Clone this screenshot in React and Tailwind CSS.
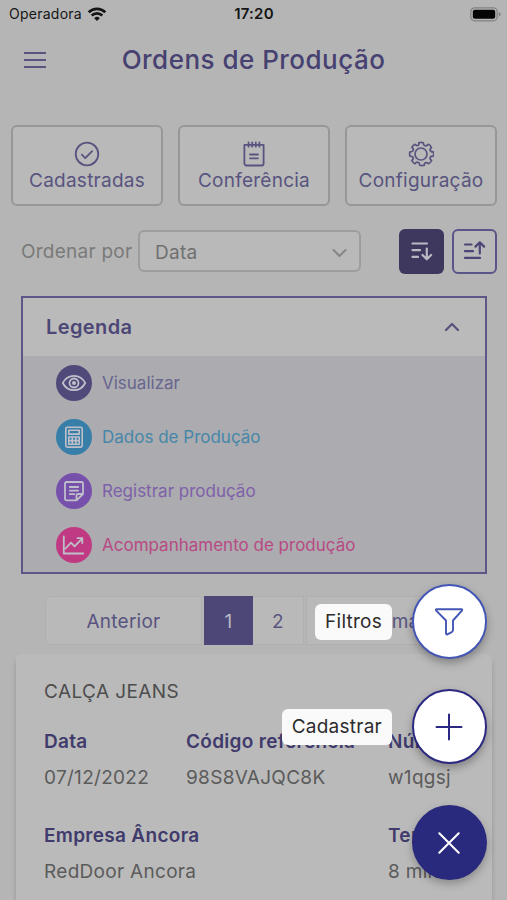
import React from "react";

const stroke = { fill: "none", stroke: "currentColor", strokeLinecap: "round", strokeLinejoin: "round" };

const WifiIcon = () => (
  <svg width="20" height="15" viewBox="0 0 20 15" fill="none" stroke="currentColor" strokeWidth="2.7">
    <path d="M1.7 5.2a11.8 11.8 0 0 1 16.6 0" />
    <path d="M4.7 8.5a7.5 7.5 0 0 1 10.6 0" />
    <path d="M10 14 L7.2 11.2a4 4 0 0 1 5.6 0z" fill="currentColor" stroke="none" />
  </svg>
);

const BatteryIcon = () => (
  <svg width="31" height="15" viewBox="0 0 31 15">
    <rect x="0.8" y="0.8" width="26.4" height="13" rx="4" fill="none" stroke="#838383" strokeWidth="1.3" />
    <rect x="2.8" y="2.8" width="22.4" height="9" rx="2" fill="#050505" />
    <path d="M28.8 5c1.5.5 2 1.4 2 2.3s-.5 1.8-2 2.3z" fill="#838383" />
  </svg>
);

const CheckIcon = () => (
  <svg width="26" height="26" viewBox="0 0 26 26" {...stroke} strokeWidth="1.8">
    <circle cx="13" cy="13" r="11.3" />
    <path d="M7.8 13.7l3.5 3.4 6.8-7" />
  </svg>
);

const NotepadIcon = () => (
  <svg width="26" height="26" viewBox="0 0 26 26" {...stroke} strokeWidth="1.8">
    <path d="M3.4 3.8h19.2v18.700a2 2 0 0 1-2 2H5.400a2 2 0 0 1-2-2z" />
    <path d="M7.600 1.500v4.200M11.200 1.500v4.200M14.800 1.500v4.200M18.400 1.500v4.200M9 13.500h8M9 17.300h8" />
  </svg>
);

const GearIcon = () => (
  <svg width="26" height="26" viewBox="0 0 26 26" {...stroke} strokeWidth="1.7">
    <circle cx="13" cy="13" r="6" />
    <path d="M10.700 1.800q2.300-1 4.600 0q.1 3 2.100 3t3-1.500q2.200 1 3 3.200q-2 1.800-1 3.300t2.900 1q.8 2.200 0 4.400q-2.900-.1-3.200 1.600t1.500 2.700q-1 2.200-3.200 3.200q-1.500-1.700-3-.9t-1.100 2.500q-2.200.8-4.600 0q.1-2.600-1.700-3t-3 1.400q-2.200-1-3.200-3.200q2-1.500 1.200-3t-3-1.300q-.8-2.200 0-4.400q2.800.2 3.300-1.500t-1.500-2.800q1-2.200 3.200-3.200q1.500 1.900 2.900 1.200t.8-2.700z" />
  </svg>
);

const SortDownIcon = () => (
  <svg width="24" height="20" viewBox="0 0 24 20" {...stroke} strokeWidth="2.200">
    <path d="M2.500 2.500h14.500M2.500 9.200h7.500M2.500 15.900h5.500M16.800 7.500v10.600M12.500 14l4.300 4.300 4.300-4.300" />
  </svg>
);

const SortUpIcon = () => (
  <svg width="24" height="20" viewBox="0 0 24 20" {...stroke} strokeWidth="2.200">
    <path d="M2 3.500h6.500M2 10.200h8M2 16.900h15M16.800 12.500v-11M12.500 5.600l4.300-4.300 4.300 4.300" />
  </svg>
);

const EyeIcon = () => (
  <svg width="26" height="26" viewBox="0 0 26 26" {...stroke} strokeWidth="1.8">
    <path d="M1.800 13C4 8.500 8 5.800 13 5.800S22 8.500 24.200 13C22 17.500 18 20.200 13 20.200S4 17.500 1.800 13z" />
    <circle cx="13" cy="13" r="4.500" />
    <circle cx="13" cy="13" r="2" fill="currentColor" stroke="none" />
  </svg>
);

const CalculatorIcon = () => (
  <svg width="26" height="26" viewBox="0 0 26 26" {...stroke} strokeWidth="1.6">
    <rect x="4.800" y="3.300" width="16.400" height="19.800" rx="1.500" />
    <rect x="7.800" y="6.300" width="10.400" height="3.800" />
    <path d="M7.800 13h10.400v7.200H7.800zM11.300 13v7.200M14.800 13v7.200M7.800 16.600h10.400" />
  </svg>
);

const NoteIcon = () => (
  <svg width="26" height="26" viewBox="0 0 26 26" {...stroke} strokeWidth="1.8">
    <path d="M15.500 22.300H5.500a1.500 1.500 0 0 1-1.500-1.500V5.500A1.500 1.500 0 0 1 5.500 4h15A1.500 1.500 0 0 1 22 5.500V16zM15.500 22.300V17.500a1.500 1.500 0 0 1 1.500-1.500h5" />
    <path d="M8.800 9h8.400M8.800 12.600h8.400M8.800 16.200h4.500" />
  </svg>
);

const ChartIcon = () => (
  <svg width="26" height="26" viewBox="0 0 26 26" {...stroke} strokeWidth="1.8">
    <path d="M2.800 4.500v17h19.500M4.500 16.500l5.500-5.800 3.600 3.600 7.200-7.500M16.500 6.200h4.800V11" />
  </svg>
);

const FunnelIcon = () => (
  <svg width="30" height="30" viewBox="0 0 30 30" {...stroke} strokeWidth="1.900">
    <path d="M2.500 2.200h25a.7.700 0 0 1 .6 1.100L19 13.500V23.200q-.2 1.300-1.300 1.900l-4.300 2.200q-1.400.5-1.400-1V13.500L2 3.300a.7.700 0 0 1 .5-1.100z" />
  </svg>
);

const PlusIcon = () => (
  <svg width="28" height="28" viewBox="0 0 28 28" {...stroke} strokeWidth="2">
    <path d="M14 1.500v25M1.500 14h25" />
  </svg>
);

const CloseIcon = () => (
  <svg width="22" height="22" viewBox="0 0 22 22" {...stroke} strokeWidth="2">
    <path d="M1.300 1.300l19.400 19.400M20.700 1.300L1.300 20.700" />
  </svg>
);

const tabs = [
  { label: "Cadastradas", Icon: CheckIcon },
  { label: "Conferência", Icon: NotepadIcon },
  { label: "Configuração", Icon: GearIcon },
];

const legend = [
  { label: "Visualizar", Icon: EyeIcon, bg: "bg-[#4f4a7a]", text: "text-[#69658f]" },
  { label: "Dados de Produção", Icon: CalculatorIcon, bg: "bg-[#377fa9]", text: "text-[#4687a8]" },
  { label: "Registrar produção", Icon: NoteIcon, bg: "bg-[#7650ab]", text: "text-[#7e61a9]" },
  { label: "Acompanhamento de produção", Icon: ChartIcon, bg: "bg-[#c03a83]", text: "text-[#b84a83]" },
];

const Field = ({ label, value }) => (
  <div className="whitespace-nowrap">
    <p className="h-9 leading-9 font-semibold text-[#403b6c]">{label}</p>
    <p className="h-9 leading-9 text-[#5b5b5b]">{value}</p>
  </div>
);

const ActionLabel = ({ children }) => (
  <span className="flex h-9 items-center rounded-md bg-[#fafafa] px-2.5 pt-px text-[19px] tracking-[0.25px] text-[#2c2c2c]">
    {children}
  </span>
);

const App = () => {
  return (
    <div className="relative h-[900px] w-[507px] overflow-hidden bg-[#b5b5b5] font-['Inter',sans-serif] text-[#58547f]">
      {/* Status bar */}
      <div className="grid h-7 grid-cols-3 items-center pl-[9px] pr-1.5 text-sm text-[#151515]">
        <div className="flex items-center gap-[5px]">
          <span className="tracking-[0.25px]">Operadora</span>
          <WifiIcon />
        </div>
        <span className="pr-0.5 text-center text-[15px] font-semibold tracking-[0.2px]">17:20</span>
        <div className="flex justify-end">
          <BatteryIcon />
        </div>
      </div>

      {/* Header */}
      <header className="relative flex h-[68px] items-center justify-center border-b border-[#b3b3b3] pb-1">
        <div className="absolute left-6 top-6 flex flex-col gap-[5px]">
          <span className="h-0.5 w-[22px] bg-[#58547f]"></span>
          <span className="h-0.5 w-[22px] bg-[#58547f]"></span>
          <span className="h-0.5 w-[22px] bg-[#58547f]"></span>
        </div>
        <h1 className="text-[26px] font-medium tracking-[0.48px] text-[#464171]">Ordens de Produção</h1>
      </header>

      <div className="mt-[29px] flex gap-[15px] pl-[11px]">
        {tabs.map(({ label, Icon }) => (
          <div
            key={label}
            className="flex h-[81px] w-[152px] flex-col items-center rounded-md border-2 border-[#979797] bg-[#b9b9b9] pt-3.5"
          >
            <Icon />
            <span className="pt-px text-[19px] leading-[26px] tracking-[0.25px]">{label}</span>
          </div>
        ))}
      </div>

      {/* Sorting */}
      <div className="mt-[22px] flex h-[46px] items-center pl-[21px] text-[#7a7a7a]">
        <span className="w-[117px] whitespace-nowrap pt-0.5 text-[19px] tracking-[0.25px]">Ordenar por</span>
        <div className="flex h-[42px] w-[223px] items-center justify-between rounded-md border-2 border-[#9d9d9d] bg-[#b9b9b9] pl-[15px] pr-3 text-[#707070]">
          <span className="pt-1 text-[19px] tracking-[0.25px]">Data</span>
          <svg className="mt-1" width="15" height="10" viewBox="0 0 15 10" {...stroke} stroke="#858585" strokeWidth="2">
            <path d="M1.500 2l6 6 6-6" />
          </svg>
        </div>
        <div className="ml-[38px] flex size-[45px] items-center justify-center rounded-md bg-[#3e385f] text-[#b9b9c4]">
          <SortDownIcon />
        </div>
        <div className="ml-2 flex size-[45px] items-center justify-center rounded-md border-2 border-[#5a5588] bg-[#b9b9b9] text-[#4b4677]">
          <SortUpIcon />
        </div>
      </div>

      {/* Legend */}
      <div className="ml-[21px] mt-[22px] h-[278px] w-[466px] border-2 border-[#5c5787] bg-[#ababb0]">
        <div className="flex h-[58px] items-center justify-between bg-[#bababa] pl-[23px] pr-[25px]">
          <span className="text-[20px] font-semibold tracking-[0.4px] text-[#4c4777]">Legenda</span>
          <svg width="16" height="10" viewBox="0 0 16 10" {...stroke} strokeWidth="2.300">
            <path d="M2 8l6-6 6 6" />
          </svg>
        </div>
        <div className="flex flex-col gap-[18px] pl-[33px] pt-[9px]">
          {legend.map(({ label, Icon, bg, text }) => (
            <div key={label} className="flex h-9 items-center gap-2.5">
              <span className={`flex size-9 items-center justify-center rounded-full text-[#bfbfca] ${bg}`}>
                <Icon />
              </span>
              <span className={`pt-0.5 text-[17px] ${text}`}>{label}</span>
            </div>
          ))}
        </div>
      </div>

      {/* Pagination */}
      <div className="ml-[45px] mt-[22px] flex h-[49px] text-[19px] tracking-[0.25px]">
        <div className="flex w-[157px] items-center justify-center rounded-l-md border border-[#afafaf] bg-[#b9b9b9] pt-[3px]">
          Anterior
        </div>
        <div className="ml-0.5 flex w-[49px] items-center justify-center bg-[#4c4777] pt-[3px] text-[#b9b9c4]">1</div>
        <div className="flex w-[51px] items-center justify-center border-y border-r border-[#afafaf] bg-[#b9b9b9] pt-[3px]">2</div>
        <div className="ml-0.5 flex w-[157px] items-center justify-center rounded-r-md border border-[#afafaf] bg-[#b9b9b9] pr-1 pt-[3px]">
          Próxima
        </div>
      </div>

      <div className="ml-4 mt-[9px] h-[260px] w-[476px] rounded-md bg-[#bababa] pl-7 pt-5 text-[19px] tracking-[0.3px] shadow-[0_6px_5px_rgba(0,0,0,0.18)]">
        <p className="h-9 leading-9 tracking-[0.4px] text-[#4d4d4d]">CALÇA JEANS</p>
        <div className="mt-3.5 grid grid-cols-[142px_202px_120px] gap-y-[22px]">
          <Field label="Data" value="07/12/2022" />
          <Field label="Código referência" value="98S8VAJQC8K" />
          <Field label="Número" value="w1qgsj" />
          <Field label="Empresa Âncora" value="RedDoor Ancora" />
          <div></div>
          <Field label="Tempo" value="8 min" />
        </div>
      </div>

      {/* Floating actions */}
      <div className="absolute bottom-5 right-5 flex flex-col items-end">
        <div className="flex items-center gap-5">
          <ActionLabel>Filtros</ActionLabel>
          <div className="flex size-[75px] items-center justify-center rounded-full border-2 border-[#4456b5] bg-white pr-px text-[#4456b5] shadow-[0_4px_8px_rgba(0,0,0,0.3)]">
            <FunnelIcon />
          </div>
        </div>
        <div className="mt-[30px] flex items-center gap-5">
          <ActionLabel>Cadastrar</ActionLabel>
          <div className="flex size-[75px] items-center justify-center rounded-full border-2 border-[#2b2881] bg-white pr-px text-[#2b2881] shadow-[0_4px_8px_rgba(0,0,0,0.3)]">
            <PlusIcon />
          </div>
        </div>
        <div className="mt-[41px] flex size-[75px] items-center justify-center rounded-full bg-[#292a7d] pr-px text-white shadow-[0_4px_8px_rgba(0,0,0,0.25)]">
          <CloseIcon />
        </div>
      </div>
    </div>
  );
};

export default App;
